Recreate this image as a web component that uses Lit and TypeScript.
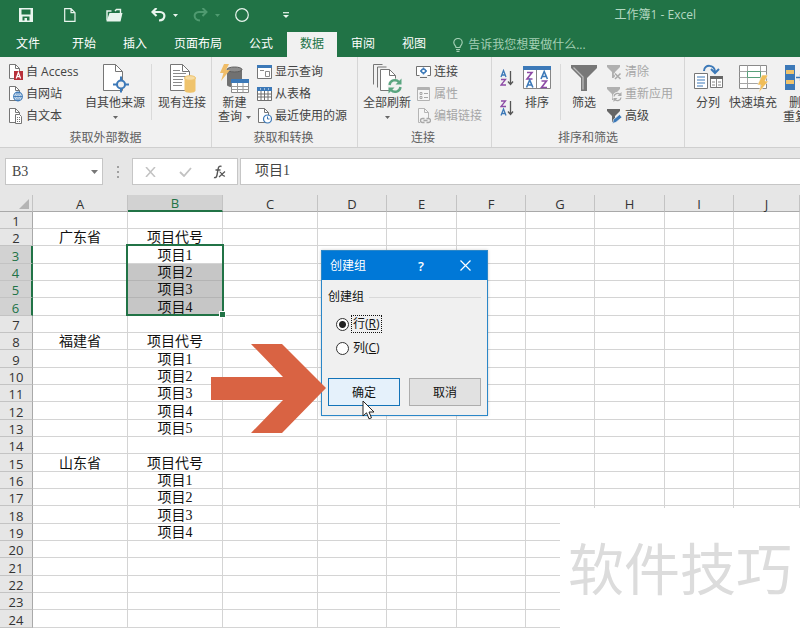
import { LitElement, html, css, svg, nothing } from "lit";
import { customElement, property, state } from "lit/decorators.js";
import { classMap } from "lit/directives/class-map.js";

const page = svg`<path d="M1.500 .5h6l4 4v10h-10z" fill="#fff" stroke="#767676"/><path d="M7.500 .5v4h4" fill="none" stroke="#767676"/>`;
const bigPage = svg`<path d="M3.500 .5h12l7 7v19h-19z" fill="#fff" stroke="#767676"/><path d="M15.500 .5v7h7" fill="none" stroke="#767676"/>`;

const small = (body: unknown) => html`<svg class="ico" width="15" height="16" viewBox="0 0 15 16" aria-hidden="true">${body}</svg>`;
const large = (body: unknown, w = 30) => html`<svg class="ico" width=${w} height="30" viewBox="0 0 ${w} 30" aria-hidden="true">${body}</svg>`;

const icons = {
  access: small(svg`${page}<path d="M6 7h9v9h-9z" fill="#b8303a"/><path d="M8.200 14.500l2.200-6 2.200 6M9 12.700h2.800" fill="none" stroke="#fff" stroke-width="1.200"/>`),
  web: small(svg`${page}<circle cx="10" cy="10.500" r="4.300" fill="#fff" stroke="#3c79b8" stroke-width="1.200"/><path d="M5.700 10.500h8.600M10 6.200v8.600M10 6.200c-3 2.500-3 6 0 8.600c3-2.500 3-6 0-8.600" fill="none" stroke="#3c79b8" stroke-width=".9"/>`),
  text: small(svg`${page}<path d="M7.500 6.500h4l2 2v7h-6z" fill="#fff" stroke="#767676"/><path d="M9 9.500h3M9 11.500h3M9 13.500h3" stroke="#767676" stroke-dasharray="1 1"/>`),
  other: large(svg`${bigPage}<circle cx="21" cy="20.500" r="4" fill="#f1f1f1" stroke="#3c79b8" stroke-width="2"/><path d="M21 12.500v4.500M21 24v4.500M13 20.500h4.500M24.500 20.500h4.500" stroke="#3c79b8" stroke-width="2"/>`),
  existing: large(svg`${bigPage}<path d="M6 6.500h7M6 9.500h13M6 12.500h13M6 15.500h10M6 18.500h9M6 21.500h9" stroke="#8a8a8a"/><path d="M17.500 14v12.500c0 3 11 3 11 0v-12.500" fill="#efc36c"/><ellipse cx="23" cy="14" rx="5.500" ry="2.300" fill="#f7dca2" stroke="#efc36c"/>`),
  query: large(svg`<path d="M8 5v16c0 3 15 3 15 0v-16" fill="#717171"/><ellipse cx="15.500" cy="5.500" rx="7.500" ry="2.500" fill="#8d8d8d" stroke="#5e5e5e"/><path d="M5 0h5l-3 6h4l-9 11 2.500-8h-3.500z" fill="#f0bd68"/><path d="M12.500 15.500h17v13h-17z" fill="#fff" stroke="#8a8a8a"/><path d="M12 15h18v4h-18z" fill="#3c79b8"/><path d="M12.500 22.500h17M12.500 25.500h17M18.500 19v9.500M24 19v9.500" stroke="#9a9a9a"/>`, 31),
  show: small(svg`<path d="M.5 1.500h14v13h-14z" fill="#fff" stroke="#767676"/><path d="M0 1h15v3h-15z" fill="#3c79b8"/><path d="M3 6.500h4M8.500 7.500h4v5h-4z" fill="none" stroke="#8a8a8a"/>`),
  table: small(svg`<path d="M.5 1.500h14v13h-14z" fill="#fff" stroke="#707070"/><path d="M0 1h15v4h-15z" fill="#3c79b8"/><path d="M.5 8h14M.5 11h14M4 5v9.500M7.500 5v9.500M11 5v9.500" stroke="#707070"/><path d="M3 3h1M7 3h1M11 3h1" stroke="#fff"/>`),
  recent: small(svg`${page}<circle cx="10.500" cy="11" r="4" fill="#fff" stroke="#3c79b8" stroke-width="1.200"/><path d="M10.500 8.500v2.500h2" fill="none" stroke="#3c79b8"/>`),
  refresh: large(svg`<g transform="translate(2 0)"><path d="M.5 20.500v-20h9M4.500 23.500v-20.500h9" fill="none" stroke="#767676"/><path d="M7.500 5.500h9l6 6v15h-15z" fill="#fff" stroke="#767676"/><path d="M16.500 5.500v6h6" fill="none" stroke="#767676"/><circle cx="22" cy="22" r="7.500" fill="#f1f1f1"/><path d="M16.500 21a5.500 5.500 0 0 1 9.500-3M27.500 23a5.500 5.500 0 0 1-9.500 3" fill="none" stroke="#5aa580" stroke-width="2.400"/><path d="M28.500 14.500v6h-6zM15.500 29.500v-6h6z" fill="#5aa580"/></g>`, 32),
  connection: small(svg`<path d="M3.500 11.500h-3v-9h14v9h-3" fill="#fff" stroke="#707070"/><path d="M4 13.500h7" stroke="#707070"/><circle cx="7.500" cy="7" r="2" fill="none" stroke="#3c79b8" stroke-width="1.400"/><path d="M7.500 3.500v2M7.500 8.500v2M4 7h2M9 7h2" stroke="#3c79b8" stroke-width="1.400"/>`),
  props: small(svg`<path d="M1.500 1.500h12v13h-12z" fill="#f6f6f6" stroke="#b2b2b2"/><path d="M1 3h13" stroke="#b2b2b2" stroke-width="2"/><path d="M8 7.500h4M8 11.500h4M4 6.500h2v2h-2zM4 10.500h2v2h-2z" fill="none" stroke="#a8a8a8"/>`),
  links: small(svg`<path d="M2.500 .5h6l4 4v10h-10z" fill="#f6f6f6" stroke="#b5b5b5"/><path d="M8.500 .5v4h4" fill="none" stroke="#b5b5b5"/><path d="M4 10h11v6h-11z" fill="#f1f1f1"/><path d="M8.500 10.500h-2a2 2 0 0 0 0 4h2M10.500 10.500h2a2 2 0 0 1 0 4h-2M7.500 12.500h4" fill="none" stroke="#a8a8a8" stroke-width="1.300"/>`),
  sort: large(svg`<path d="M1.500 2.500h27v22h-27z" fill="#fff" stroke="#858585"/><path d="M1 2h28v4h-28z" fill="#3c79b8"/><path d="M14.500 6v18.500" stroke="#858585"/><g fill="none" stroke-width="1.600"><path d="M5 8.500h5l-5 6.500h5.500M19.500 17h5l-5 6.500h5.500" stroke="#8d4ba6"/><path d="M4.500 23.500l3.200-7.500 3.200 7.500M5.500 21h4.500M19 15l3.200-7.500 3.200 7.500M20 12.500h4.500" stroke="#3c79b8"/></g>`),
  filter: large(svg`<path d="M2 1h26v3l-10 10v13h-6v-13l-10-10z" fill="#777"/><path d="M4.500 3.500l9.500 9.500v12.500" fill="none" stroke="#bcbcbc" stroke-width="1.300"/>`),
  clear: small(svg`<path d="M0 1h13v2l-5 5v6h-3v-6l-5-5z" fill="#b0b0b0"/><path d="M7.500 9l6 6M13.500 9l-6 6" stroke="#f1f1f1" stroke-width="3"/><path d="M8 9.500l5.500 5.500M13.500 9.500l-5.500 5.500" stroke="#aaa" stroke-width="1.500"/>`),
  reapply: small(svg`<path d="M0 1h13v2l-5 5v6h-3v-6l-5-5z" fill="#b0b0b0"/><circle cx="10.500" cy="11" r="5" fill="#f1f1f1"/><path d="M7 10.500a3.500 3.500 0 0 1 6-2M14 11.500a3.500 3.500 0 0 1-6 2" fill="none" stroke="#aaa" stroke-width="1.300"/><path d="M14.500 6v4h-4zM6.500 16v-4h4z" fill="#aaa"/>`),
  advanced: small(svg`<path d="M0 1h13v2l-5 5v6h-3v-6l-5-5z" fill="#666"/><path d="M5.500 15.500l1-4 6-5 2.500 2.800-6 5z" fill="#3c79b8" stroke="#f1f1f1" stroke-width=".7"/>`),
  columns: large(svg`<path d="M11 7c0-7 11-7 11 1" fill="none" stroke="#3c79b8" stroke-width="2"/><path d="M18 5l4 4 4-4" fill="none" stroke="#3c79b8" stroke-width="2"/><path d="M1.500 9.500h13v15h-13z" fill="#fff" stroke="#767676"/><path d="M4 13h8M4 16h8M4 19h8M4 22h6" stroke="#3c79b8"/><path d="M17.500 12.500h12v11h-12z" fill="#fff" stroke="#767676"/><path d="M17 12h13v3h-13z" fill="#666"/><path d="M23.500 15v8M19 18h3M19 21h3M25 18h3M25 21h3" stroke="#8a8a8a"/>`),
  flash: large(svg`<path d="M1.500 1.500h27v23h-27z" fill="#fff" stroke="#8a8a8a"/><path d="M1.500 7.500h27M1.500 13.500h27M1.500 19.500h27M9.500 1.500v23M22.500 1.500v6M22.500 13.500v11" stroke="#a5a5a5"/><path d="M9.500 7.500h13v6h-13z" fill="#fff" stroke="#57a07a"/><path d="M24 11h6l-3 6h3.500l-10 12 2.500-8h-3.500z" fill="#f0bd58" stroke="#f6f6f6" stroke-width=".6"/>`, 31),
  dedupe: large(svg`<path d="M1 1h10v25h-10z" fill="#3c79b8"/><path d="M2 6h8v4h-8zM2 16h8v4h-8z" fill="#efc36c"/><path d="M12 13.500h7M16 10.500l3 3-3 3" fill="none" stroke="#3c79b8" stroke-width="1.500"/><path d="M22 1h9v25h-9z" fill="#3c79b8"/>`, 34),
  az: html`<svg class="ico" width="14" height="18" viewBox="0 0 14 18" aria-hidden="true"><g fill="none" stroke-width="1.300"><path d="M1 8l2.500-6.500 2.500 6.500M2 6h3" stroke="#3c79b8"/><path d="M1 10.500h4.500l-4.500 5.500h5" stroke="#8d4ba6"/><path d="M10.500 2v13M8 12.500l2.500 3 2.500-3" stroke="#555"/></g></svg>`,
  za: html`<svg class="ico" width="14" height="18" viewBox="0 0 14 18" aria-hidden="true"><g fill="none" stroke-width="1.300"><path d="M1 2h4.500l-4.500 5.500h5" stroke="#8d4ba6"/><path d="M1 16.500l2.500-6.500 2.500 6.500M2 14.500h3" stroke="#3c79b8"/><path d="M10.500 2v13M8 12.500l2.500 3 2.500-3" stroke="#555"/></g></svg>`,
};

const sans = css`"Open Sans", "Noto Sans CJK SC", sans-serif`;

@customElement("quick-bar")
class QuickBar extends LitElement {
  static styles = css`
    :host { display: flex; align-items: center; height: 30px; padding-left: 16px; color: #e9f5ee; font: 12px/16px ${sans}; }
    .tool { display: flex; justify-content: center; align-items: center; width: 20px; height: 20px; margin-right: 24px; padding: 0; border: 0; background: none; color: inherit; }
    .split { margin-right: 2px; }
    .drop { width: 10px; margin-right: 10px; }
    .dim { color: #4f9a70; }
    .title { margin: 0 104px 0 auto; color: #b4d8c2; white-space: nowrap; }
    svg { flex: none; }
  `;
  render() {
    return html`
      <button class="tool" aria-label="保存"><svg width="14" height="14" viewBox="0 0 14 14"><path d="M0 0h14v14h-14zM2.500 1.500v5h9v-5zM3.500 8.500v4h2v-2.500h2.500v2.500h2.500v-4z" fill="currentColor" fill-rule="evenodd"/></svg></button>
      <button class="tool" aria-label="新建"><svg width="12" height="14" viewBox="0 0 12 14"><path d="M.7 .7h6.300l4 4v8.600h-10.300zM7 .7v4h4" fill="none" stroke="currentColor" stroke-width="1.200"/></svg></button>
      <button class="tool" aria-label="打开"><svg width="17" height="14" viewBox="0 0 17 14"><path d="M1 12.500v-9.500h4.500M9 3l1.500-1.500h4v4" fill="none" stroke="currentColor" stroke-width="1.400"/><path d="M3.500 5h13l-2 8.500h-14z" fill="currentColor"/></svg></button>
      <button class="tool split" aria-label="撤消"><svg width="15" height="14" viewBox="0 0 15 14"><path d="M5.500 0l-4 4 4 4M1.500 4h7.500c6 0 6 8-1 8.500" fill="none" stroke="currentColor" stroke-width="2.200"/></svg></button>
      <button class="tool drop" aria-label="撤消列表"><svg width="5" height="3"><path d="M0 0h5l-2.500 3z" fill="currentColor"/></svg></button>
      <button class="tool split dim" aria-label="恢复"><svg width="15" height="14" viewBox="0 0 15 14"><path d="M9.500 0l4 4-4 4M13.500 4h-7.500c-6 0-6 8 1 8.500" fill="none" stroke="currentColor" stroke-width="2"/></svg></button>
      <button class="tool drop dim" aria-label="恢复列表"><svg width="5" height="3"><path d="M0 0h5l-2.500 3z" fill="currentColor"/></svg></button>
      <button class="tool" aria-label="形状"><svg width="14" height="14"><circle cx="7" cy="7" r="6.300" fill="none" stroke="currentColor" stroke-width="1.200"/></svg></button>
      <button class="tool" aria-label="自定义"><svg width="6" height="7"><path d="M0 .7h6" stroke="currentColor" stroke-width="1.200"/><path d="M0 3h6l-3 3z" fill="currentColor"/></svg></button>
      <span class="title">工作簿1 - Excel</span>`;
  }
}

@customElement("ribbon-tabs")
class RibbonTabs extends LitElement {
  @state() private current = "数据";
  static styles = css`
    :host { display: flex; height: 27px; padding-left: 3px; font: 12px/16px ${sans}; }
    .tabs { display: flex; gap: 1px; padding-top: 2px; }
    .tab { flex: none; padding: 0 13px 1px; border: 0; background: none; color: #fff; font: inherit; white-space: nowrap; }
    .file { margin-right: 5px; }
    .on { background: #f1f1f1; color: #217346; }
    .tell { display: flex; align-items: center; gap: 5px; margin-left: 14px; padding: 2px 0 0; border: 0; background: none; color: #a3cfb4; font: inherit; white-space: nowrap; }
  `;
  render() {
    return html`
      <nav class="tabs">
        ${["文件", "开始", "插入", "页面布局", "公式", "数据", "审阅", "视图"].map(
          (t) => html`<button class=${classMap({ tab: true, file: t === "文件", on: t === this.current })} @click=${() => (this.current = t)}>${t}</button>`
        )}
      </nav>
      <button class="tell"><svg width="10" height="14" viewBox="0 0 10 14"><path d="M3 9.500c0-2-2.200-2.500-2.200-5a4.200 4 0 0 1 8.400 0c0 2.500-2.200 3-2.200 5zM3 11.500h4M3.500 13.300h3" fill="none" stroke="currentColor" stroke-width="1.200"/></svg>告诉我您想要做什么...</button>`;
  }
}

@customElement("ribbon-panel")
class RibbonPanel extends LitElement {
  static styles = css`
    :host { display: flex; overflow: hidden; height: 90px; background: #f1f1f1; border-bottom: 1px solid #cfcfcf; color: #444; font: 12px/14px ${sans}; }
    .group { display: flex; flex: none; flex-direction: column; gap: 3px; box-sizing: border-box; padding: 4px 0 1px 8px; }
    .group + .group { border-left: 1px solid #d6d6d6; }
    .external { width: 211px; }
    .transform { width: 146px; padding-left: 6px; }
    .connect { width: 134px; padding-left: 5px; }
    .sorting { width: 193px; }
    .tools { flex: 1 0 auto; }
    .body { display: flex; gap: 6px; height: 66px; }
    .sorting .body { gap: 8px; }
    .connect .body { gap: 5px; }
    .caption { margin-left: -8px; line-height: 16px; text-align: center; color: #606060; }
    .list { display: flex; flex-direction: column; min-width: 71px; }
    .item { display: flex; align-items: center; gap: 3px; height: 22px; padding: 0; border: 0; background: none; color: inherit; font: inherit; white-space: nowrap; }
    .item:disabled { color: #a6a6a6; }
    .big { display: flex; flex-direction: column; align-items: center; min-width: 30px; padding: 3px 0 0; border: 0; background: none; color: inherit; font: inherit; white-space: nowrap; }
    .row { display: flex; align-items: center; gap: 4px; min-height: 14px; }
    .ico + .row { margin-top: 2px; }
    .orders { display: flex; flex-direction: column; gap: 12px; padding-top: 8px; }
    .order { display: flex; padding: 0; border: 0; background: none; }
    .rule { width: 1px; height: 56px; margin-top: 3px; background: #dadada; }
    .ico { flex: none; display: block; }
  `;
  private item = (icon: unknown, label: string, off = false) => html`<button class="item" ?disabled=${off}>${icon}${label}</button>`;
  private big = (icon: unknown, label: string, second: string = "", drop = false) => html`
    <button class="big">${icon}<span class="row">${label}</span><span class="row">${second}${drop ? html`<svg class="ico" width="5" height="3"><path d="M0 0h5l-2.500 3z" fill="#666"/></svg>` : nothing}</span></button>`;
  render() {
    const { item, big } = this;
    return html`
      <section class="group external">
        <div class="body">
          <div class="list">${item(icons.access, "自 Access")}${item(icons.web, "自网站")}${item(icons.text, "自文本")}</div>
          ${big(icons.other, "自其他来源", "", true)}
          <span class="rule"></span>
          ${big(icons.existing, "现有连接")}
        </div>
        <div class="caption">获取外部数据</div>
      </section>
      <section class="group transform">
        <div class="body">
          ${big(icons.query, "新建", "查询", true)}
          <div class="list">${item(icons.show, "显示查询")}${item(icons.table, "从表格")}${item(icons.recent, "最近使用的源")}</div>
        </div>
        <div class="caption">获取和转换</div>
      </section>
      <section class="group connect">
        <div class="body">
          ${big(icons.refresh, "全部刷新", "", true)}
          <div class="list">${item(icons.connection, "连接")}${item(icons.props, "属性", true)}${item(icons.links, "编辑链接", true)}</div>
        </div>
        <div class="caption">连接</div>
      </section>
      <section class="group sorting">
        <div class="body">
          <div class="orders"><button class="order" aria-label="升序">${icons.az}</button><button class="order" aria-label="降序">${icons.za}</button></div>
          ${big(icons.sort, "排序")}
          <span class="rule"></span>
          ${big(icons.filter, "筛选")}
          <div class="list">${item(icons.clear, "清除", true)}${item(icons.reapply, "重新应用", true)}${item(icons.advanced, "高级")}</div>
        </div>
        <div class="caption">排序和筛选</div>
      </section>
      <section class="group tools">
        <div class="body">
          ${big(icons.columns, "分列")}${big(icons.flash, "快速填充")}${big(icons.dedupe, "删除", "重复项")}
        </div>
      </section>`;
  }
}

@customElement("formula-bar")
class FormulaBar extends LitElement {
  static styles = css`
    :host { display: flex; box-sizing: border-box; height: 47px; padding: 10px 0 10px 5px; background: #e6e6e6; }
    .box { display: flex; align-items: center; box-sizing: border-box; border: 1px solid #c6c6c6; background: #fff; }
    .name { width: 98px; }
    .field { flex: 1; min-width: 0; padding: 1px 0 0 6px; border: 0; outline: 0; background: none; color: #444; font: 14px/18px "Liberation Serif", "Noto Sans CJK SC", serif; }
    .btn { display: flex; align-items: center; justify-content: center; width: 35px; padding: 0; border: 0; background: none; }
    .drop { width: 16px; }
    .dots { display: flex; align-items: center; justify-content: center; width: 29px; }
    .actions { width: 106px; margin-right: 2px; }
    .entry { flex: 1; border-right: 0; }
    .entry .field { padding: 0 0 1px 14px; }
  `;
  render() {
    return html`
      <div class="box name"><input class="field" aria-label="名称框" .value=${"B3"} /><button class="btn drop" aria-label="名称列表"><svg width="7" height="4"><path d="M0 0h7l-3.500 4z" fill="#777"/></svg></button></div>
      <span class="dots"><svg width="2" height="12"><path d="M1 0v12" stroke="#a0a0a0" stroke-width="2" stroke-dasharray="2 3"/></svg></span>
      <div class="box actions">
        <button class="btn" aria-label="取消"><svg width="11" height="10"><path d="M1 0l9 10M10 0l-9 10" stroke="#c2c2c2" stroke-width="1.500"/></svg></button>
        <button class="btn" aria-label="输入"><svg width="13" height="10"><path d="M1 5l4 4 7-8" fill="none" stroke="#c2c2c2" stroke-width="1.800"/></svg></button>
        <button class="btn" aria-label="插入函数"><svg width="13" height="14" viewBox="0 0 13 14"><path d="M8.500 1.500c-2-1-3 0-3.500 3l-1 5.500c-.5 2.500-1.500 3-3 2.500M2.500 5h5" fill="none" stroke="#555" stroke-width="1.400"/><path d="M6.500 7c2-.5 2.500 5 5.500 4M12 6.500l-6 5.500" fill="none" stroke="#555" stroke-width="1.200"/></svg></button>
      </div>
      <div class="box entry"><input class="field" aria-label="编辑栏" .value=${"项目1"} /></div>`;
  }
}

const cells: Record<number, [string, string]> = {
  2: ["广东省", "项目代号"], 3: ["", "项目1"], 4: ["", "项目2"], 5: ["", "项目3"], 6: ["", "项目4"],
  8: ["福建省", "项目代号"], 9: ["", "项目1"], 10: ["", "项目2"], 11: ["", "项目3"], 12: ["", "项目4"], 13: ["", "项目5"],
  15: ["山东省", "项目代号"], 16: ["", "项目1"], 17: ["", "项目2"], 18: ["", "项目3"], 19: ["", "项目4"],
};

@customElement("sheet-grid")
class SheetGrid extends LitElement {
  @property({ type: Number }) first = 3;
  @property({ type: Number }) last = 6;
  static styles = css`
    :host { display: block; background: #fff; }
    .sheet { width: 100%; table-layout: fixed; border-collapse: separate; border-spacing: 0; font: 14px/14px "Liberation Serif", "Noto Sans CJK SC", serif; color: #111; }
    .heads { width: 33px; }
    .wide { width: 95px; }
    .slim { width: 69px; }
    .mid { width: 70px; }
    th, td { box-sizing: border-box; height: 17px; padding: 2px 0 0; border-right: 1px solid #d4d4d4; border-bottom: 1px solid #d4d4d4; text-align: center; white-space: nowrap; }
    tbody tr:nth-child(3n) > * { height: 18px; }
    th { background: #e6e6e6; color: #333; font: 13px/14px ${sans}; border-color: #c3c3c3; }
    thead th { border-bottom-color: #a9a9a9; }
    tbody th { border-right-color: #a9a9a9; }
    thead .pick { padding-top: 1px; background: #d2d2d2; color: #217346; border-bottom: 2px solid #217346; }
    tbody .pick { background: #d2d2d2; color: #217346; border-right: 2px solid #217346; }
    .corner { padding: 0; vertical-align: bottom; }
    .corner svg { display: block; margin: 0 3px 2px auto; }
    .shade { background: #c6c6c6; border-bottom-color: #b4b4b4; }
    .anchor { position: relative; }
    .frame { position: absolute; top: -2px; left: -2px; right: -2px; height: 68px; border: 2px solid #217346; }
    .handle { position: absolute; right: -4px; bottom: -4px; width: 5px; height: 5px; border: 1px solid #fff; background: #217346; }
  `;
  render() {
    const cols = "ABCDEFGHIJ".split("");
    const rows = Array.from({ length: 24 }, (_, i) => i + 1);
    const inside = (r: number) => r >= this.first && r <= this.last;
    return html`<table class="sheet">
      <colgroup><col class="heads" /><col class="wide" /><col class="wide" /><col class="wide" /><col class="slim" /><col class="mid" /><col class="slim" /><col class="slim" /><col class="mid" /><col class="slim" /><col /></colgroup>
      <thead><tr><th class="corner" aria-label="全选"><svg width="10" height="10"><path d="M10 0v10h-10z" fill="#b4b4b4"/></svg></th>
        ${cols.map((c) => html`<th class=${classMap({ pick: c === "B" })}>${c}</th>`)}</tr></thead>
      <tbody>${rows.map((r) => html`<tr><th class=${classMap({ pick: inside(r) })}>${r}</th>
        ${cols.map((_, c) => html`<td class=${classMap({ anchor: c === 1 && r === this.first, shade: c === 1 && inside(r) && r !== this.first })}>${cells[r]?.[c] ?? ""}${c === 1 && r === this.first ? html`<span class="frame"><i class="handle"></i></span>` : nothing}</td>`)}
      </tr>`)}</tbody>
    </table>`;
  }
}

@customElement("group-dialog")
class GroupDialog extends LitElement {
  static styles = css`
    :host { display: block; box-sizing: border-box; width: 167px; border: 1px solid #2b87c8; background: #f0f0f0; box-shadow: 0 0 3px #0003; color: #111; font: 12px/16px ${sans}; }
    .bar { display: flex; align-items: center; height: 29px; padding-left: 8px; background: #0078d7; color: #fff; }
    .heading { flex: 1; margin: 0; font: inherit; }
    .tool { display: flex; align-items: center; justify-content: center; width: 44px; padding: 0; border: 0; background: none; color: #fff; font: 600 13px/16px ${sans}; }
    .content { padding: 9px 6px; }
    .set { display: flex; flex-direction: column; gap: 4px; margin: 0; padding: 9px 0 0 8px; border: 0; border-top: 1px solid #d9d9d9; }
    .legend { margin-left: -8px; padding: 0 5px 0 0; }
    .choice { display: flex; align-items: center; gap: 2px; height: 20px; }
    .radio { appearance: none; box-sizing: border-box; width: 13px; height: 13px; margin: 0; border: 1px solid #333; border-radius: 50%; background: #fff; }
    .radio:checked { background: radial-gradient(circle, #222 3px, #fff 4px); }
    .text { padding: 0 1px; border: 1px dotted transparent; }
    .radio:checked + .text { border-color: #111; }
    .actions { display: flex; gap: 9px; margin-top: 20px; }
    .btn { flex: 1; height: 28px; padding: 1px 0 0; border: 1px solid #adadad; background: #e1e1e1; color: inherit; font: inherit; }
    .main { border-color: #1373b8; background: #e5f1fb; }
  `;
  render() {
    return html`
      <header class="bar"><h2 class="heading">创建组</h2><button class="tool" aria-label="帮助">?</button><button class="tool" aria-label="关闭"><svg width="11" height="11"><path d="M.5 .5l10 10M10.500 .5l-10 10" stroke="#fff" stroke-width="1.200"/></svg></button></header>
      <form class="content" @submit=${(e: Event) => e.preventDefault()}>
        <fieldset class="set"><legend class="legend">创建组</legend>
          <label class="choice"><input class="radio" type="radio" name="axis" checked /><span class="text">行(<u>R</u>)</span></label>
          <label class="choice"><input class="radio" type="radio" name="axis" /><span class="text">列(<u>C</u>)</span></label>
        </fieldset>
        <div class="actions"><button class="btn main">确定</button><button class="btn" type="button">取消</button></div>
      </form>`;
  }
}

@customElement("app-root")
class AppRoot extends LitElement {
  static styles = css`
    :host { display: block; position: relative; overflow: hidden; height: 100vh; background: #fff; }
    .top { background: #217346; }
    .dialog { position: absolute; left: 321px; top: 250px; }
    .arrow { position: absolute; left: 210px; top: 344px; }
    .cursor { position: absolute; left: 362px; top: 400px; }
    .mark { position: absolute; right: 0; bottom: 0; box-sizing: border-box; width: 240px; height: 120px; padding: 18px 8px; background: #fff; color: #dcdcdc; font: 56px/80px "Noto Sans CJK SC", sans-serif; white-space: nowrap; }
  `;
  render() {
    return html`
      <header class="top"><quick-bar></quick-bar><ribbon-tabs></ribbon-tabs></header>
      <ribbon-panel></ribbon-panel>
      <formula-bar></formula-bar>
      <sheet-grid></sheet-grid>
      <div class="mark">软件技巧</div>
      <group-dialog class="dialog" role="dialog"></group-dialog>
      <svg class="arrow" width="116" height="90" aria-hidden="true"><path d="M1 33h72l-32-33h31l44 44-44 45h-31l32-33h-72z" fill="#d96343"/></svg>
      <svg class="cursor" width="13" height="20" aria-hidden="true"><path d="M1 1v15l3.500-3.200 2.500 6 2.500-1-2.500-5.800h5z" fill="#fff" stroke="#222"/></svg>`;
  }
}
